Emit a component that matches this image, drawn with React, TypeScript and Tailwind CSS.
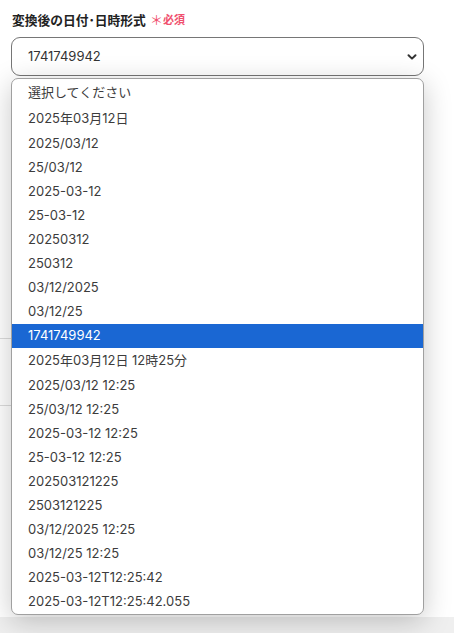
const options: string[] = [
  "選択してください",
  "2025年03月12日",
  "2025/03/12",
  "25/03/12",
  "2025-03-12",
  "25-03-12",
  "20250312",
  "250312",
  "03/12/2025",
  "03/12/25",
  "1741749942",
  "2025年03月12日 12時25分",
  "2025/03/12 12:25",
  "25/03/12 12:25",
  "2025-03-12 12:25",
  "25-03-12 12:25",
  "202503121225",
  "2503121225",
  "03/12/2025 12:25",
  "03/12/25 12:25",
  "2025-03-12T12:25:42",
  "2025-03-12T12:25:42.055",
];

const selected = "1741749942";
const font = { fontFamily: 'Inter, "Noto Sans CJK JP", sans-serif' };

export default function App() {
  return (
    <div className="relative w-[454px] h-[633px] bg-white overflow-hidden flex flex-col" style={font}>
      {/* form field */}
      <div className="pt-[11px] px-[11px]">
        <div className="flex items-center gap-[4px] h-[19px] pl-px">
          <span className="text-[12.75px] font-bold text-[#222]">変換後の日付･日時形式</span>
          <span className="flex items-center text-[11px] font-bold text-[#f0506e]">
            <span className="text-[13px] font-normal leading-none">＊</span>
            必須
          </span>
        </div>
        <div className="mt-[7px] h-[39px] w-[413px] rounded-[9px] border border-[#767676] flex items-center justify-between pl-[16px] pr-[6px]">
          <span className="text-[13px] text-[#333] pt-px">{selected}</span>
          <svg width="10" height="8" viewBox="0 0 10 8">
            <path d="M1.5 2.2 L5 5.6 L8.5 2.2" fill="none" stroke="#333" strokeWidth="2" strokeLinecap="round" strokeLinejoin="round" />
          </svg>
        </div>
      </div>

      {/* rest of the page underneath */}
      <div className="mt-[262px] w-[12px] border-t border-[#dcdcdc]" />
      <div className="mt-[66px] w-[12px] border-t border-[#dcdcdc]" />
      <div className="flex-1" />
      <div className="h-[16px] bg-[#efefef]" />

      {/* open dropdown list */}
      <div className="absolute left-[11px] top-[78px] w-[413px] h-[537px] rounded-[7px] border border-[#a0a0a0] bg-white shadow-[0_6px_28px_rgba(0,0,0,0.22)] overflow-hidden py-px">
        {options.map((opt) => {
          const tall = /[^\x00-\x7f]/.test(opt);
          const active = opt === selected;
          return (
            <div
              key={opt}
              className={`${tall ? "h-[26px]" : "h-[24px]"} flex items-center pl-[16px] text-[13px] ${
                active ? "bg-[#1a67d3] text-white" : "text-[#3c3c3c]"
              }`}
            >
              {opt}
            </div>
          );
        })}
      </div>
    </div>
  );
}
